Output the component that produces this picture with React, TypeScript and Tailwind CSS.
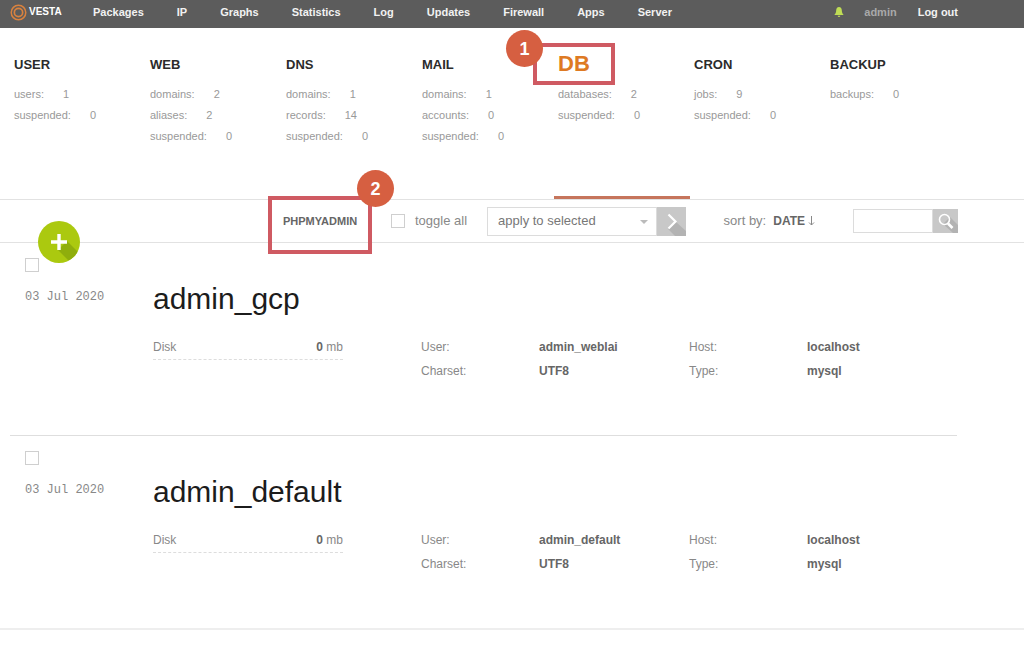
import { useState } from 'react';

const NAV_LINKS = ['Packages', 'IP', 'Graphs', 'Statistics', 'Log', 'Updates', 'Firewall', 'Apps', 'Server'];

type Section = {
  title: string;
  stats: { label: string; value: number }[];
  active?: boolean;
};

const SECTIONS: Section[] = [
  { title: 'USER', stats: [{ label: 'users', value: 1 }, { label: 'suspended', value: 0 }] },
  {
    title: 'WEB',
    stats: [
      { label: 'domains', value: 2 },
      { label: 'aliases', value: 2 },
      { label: 'suspended', value: 0 },
    ],
  },
  {
    title: 'DNS',
    stats: [
      { label: 'domains', value: 1 },
      { label: 'records', value: 14 },
      { label: 'suspended', value: 0 },
    ],
  },
  {
    title: 'MAIL',
    stats: [
      { label: 'domains', value: 1 },
      { label: 'accounts', value: 0 },
      { label: 'suspended', value: 0 },
    ],
  },
  {
    title: 'DB',
    active: true,
    stats: [{ label: 'databases', value: 2 }, { label: 'suspended', value: 0 }],
  },
  { title: 'CRON', stats: [{ label: 'jobs', value: 9 }, { label: 'suspended', value: 0 }] },
  { title: 'BACKUP', stats: [{ label: 'backups', value: 0 }] },
];

const DATABASES = [
  { name: 'admin_gcp', date: '03 Jul 2020', disk: 0, user: 'admin_weblai', charset: 'UTF8', host: 'localhost', type: 'mysql' },
  { name: 'admin_default', date: '03 Jul 2020', disk: 0, user: 'admin_default', charset: 'UTF8', host: 'localhost', type: 'mysql' },
];

const CHECKBOX = 'block size-[14px] shrink-0 appearance-none border border-[#cfcfcf] bg-white checked:bg-[#aacb12]';

/** Numbered step marker that sits on the corner of a highlight frame. */
function StepBadge({ step, className }: { step: number; className: string }) {
  return (
    <span
      className={`absolute flex size-[37px] items-center justify-center rounded-full bg-[#d65f41] text-lg font-bold text-white ${className}`}
    >
      {step}
    </span>
  );
}

function Logo() {
  return (
    <a href="#" className="flex w-[83px] shrink-0 items-center gap-[2px] text-white">
      <svg viewBox="0 0 18 18" className="size-[17px]" fill="none" stroke="#d9823f">
        <circle cx="9" cy="9" r="7.7" strokeWidth="1.6" />
        <circle cx="9" cy="9" r="4.4" strokeWidth="1.8" />
      </svg>
      <span className="text-[10px] leading-none font-bold">VESTA</span>
    </a>
  );
}

function TopBar() {
  return (
    <header className="flex h-7 items-center bg-[#5c5c5c] pr-[66px] pb-1 pl-[10px] text-[11px] font-bold text-[#f2f2f2]">
      <Logo />
      <nav className="flex gap-[33px]">
        {NAV_LINKS.map((link) => (
          <a key={link} href="#">
            {link}
          </a>
        ))}
      </nav>
      <div className="ml-auto flex items-center">
        <button type="button" aria-label="Notifications" className="mr-5">
          <svg viewBox="0 0 10 10" className="size-[10px]" fill="#bfdc55">
            <path d="M5 0C3.1 0 2.3 1.4 2.2 3.2 2.1 5.4 1.6 6.6.3 8h9.4C8.4 6.6 7.9 5.4 7.8 3.2 7.7 1.4 6.9 0 5 0ZM3.7 8.7a1.3 1.3 0 0 0 2.6 0Z" />
          </svg>
        </button>
        <a href="#" className="mr-[21px] text-[#a9a9a9]">
          admin
        </a>
        <a href="#">Log out</a>
      </div>
    </header>
  );
}

function SectionTab({ section }: { section: Section }) {
  return (
    <div className={`h-full border-b-[3px] px-1 ${section.active ? 'border-[#c6755c]' : 'border-transparent'}`}>
      <h2 className="relative flex h-[22px] items-center">
        <a
          href="#"
          className={
            section.active ? 'pb-1 text-[22px] font-bold text-[#de7a23]' : 'text-[13px] font-bold text-[#2b2b2b]'
          }
        >
          {section.title}
        </a>
        {section.active && (
          <>
            <span className="pointer-events-none absolute -top-[11px] -left-[25px] h-[42px] w-[82px] border-4 border-[#cf5a62]" />
            <StepBadge step={1} className="-top-6 -left-[52px]" />
          </>
        )}
      </h2>
      <dl className="mt-2 text-[11px] leading-[21px] text-[#999]">
        {section.stats.map((s) => (
          <div key={s.label} className="flex gap-[19px]">
            <dt>{s.label}:</dt>
            <dd>{s.value}</dd>
          </div>
        ))}
      </dl>
    </div>
  );
}

function Toolbar({ allSelected, onToggleAll }: { allSelected: boolean; onToggleAll: (v: boolean) => void }) {
  return (
    <div className="relative flex h-11 items-center border-y border-[#e2e2e2] pr-[66px] pl-[283px] text-[13px] text-[#888]">
      <button
        type="button"
        aria-label="Add database"
        className="absolute -bottom-[21px] left-[38px] size-[42px] overflow-hidden rounded-full bg-[#abc90f]"
      >
        <svg viewBox="0 0 42 42" className="size-full">
          <path d="M29 20 42 33V42H33L20 29Z" fill="#8fae0c" />
          <path d="M21 13v16M13 21h16" stroke="#fff" strokeWidth="3.4" />
        </svg>
      </button>

      <div className="relative w-[108px] shrink-0">
        <a href="#" className="text-[11px] font-bold text-[#666]">
          PHPMYADMIN
        </a>
        <span className="pointer-events-none absolute -top-[15px] -left-[15px] h-[58px] w-[104px] border-4 border-[#cf5a62]" />
        <StepBadge step={2} className="-top-[41px] left-[74px]" />
      </div>

      <label className="flex shrink-0 items-center gap-[10px]">
        <input
          type="checkbox"
          className={CHECKBOX}
          checked={allSelected}
          onChange={(e) => onToggleAll(e.target.checked)}
        />
        toggle all
      </label>

      <form className="ml-5 flex h-[29px] shrink-0" onSubmit={(e) => e.preventDefault()}>
        <div className="relative">
          <select
            aria-label="Apply to selected"
            className="h-full w-[170px] appearance-none border border-[#dcdcdc] bg-white pl-[10px] text-[13px] text-[#777]"
          >
            <option>apply to selected</option>
            <option>delete</option>
          </select>
          <svg viewBox="0 0 8 4" className="pointer-events-none absolute top-[13px] right-[9px] h-1 w-2" fill="#bbb">
            <path d="M0 0h8L4 4Z" />
          </svg>
        </div>
        <button type="submit" aria-label="Apply" className="w-[29px] bg-[#c8c8c8]">
          <svg viewBox="0 0 29 29" className="size-full" fill="none">
            <path d="M19 15 29 24V29H18L11 22Z" fill="#b3b3b3" />
            <path d="m11.500 7.500 7 7-7 7" stroke="#fff" strokeWidth="2.2" />
          </svg>
        </button>
      </form>

      <div className="ml-auto flex shrink-0 items-center">
        <span>sort by:</span>
        <button type="button" className="ml-[7px] flex items-center gap-[3px] text-[12px] font-bold text-[#666]">
          DATE
          <svg viewBox="0 0 7 10" className="h-[10px] w-[7px]" fill="none" stroke="#888">
            <path d="M3.5 0v9M1 6.5l2.5 2.5L6 6.5" />
          </svg>
        </button>
        <form className="ml-[38px] flex h-6" onSubmit={(e) => e.preventDefault()}>
          <input type="text" aria-label="Search" className="w-20 border border-[#dcdcdc] bg-white px-1" />
          <button type="submit" aria-label="Search" className="w-[25px] bg-[#c8c8c8]">
            <svg viewBox="0 0 25 24" className="size-full" fill="none">
              <path d="M17 8 25 16V24H20L10 15Z" fill="#b3b3b3" />
              <circle cx="11.5" cy="10.5" r="5" stroke="#fff" strokeWidth="1.6" />
              <path d="m15 14.500 4.500 4.500" stroke="#fff" strokeWidth="2.6" />
            </svg>
          </button>
        </form>
      </div>
    </div>
  );
}

function Details({ items }: { items: [string, string][] }) {
  return (
    <dl className="grid grid-cols-[118px_1fr]">
      {items.map(([label, value]) => (
        <div key={label} className="contents">
          <dt>{label}:</dt>
          <dd className="font-bold text-[#666]">{value}</dd>
        </div>
      ))}
    </dl>
  );
}

function DatabaseRow({
  db,
  checked,
  onChange,
}: {
  db: (typeof DATABASES)[number];
  checked: boolean;
  onChange: () => void;
}) {
  return (
    <li className="grid grid-cols-[143px_1fr_1fr_1fr] pt-[15px] pb-[52px]">
      <div className="pl-[15px]">
        <input type="checkbox" aria-label={`Select ${db.name}`} className={CHECKBOX} checked={checked} onChange={onChange} />
        <p className="mt-[17px] font-['Liberation_Mono',monospace] text-[12px] leading-4 text-[#888]">{db.date}</p>
      </div>
      <div className="col-span-3 pt-[23px]">
        <h3 className="text-[30px] leading-9 text-[#1c1c1c]">{db.name}</h3>
        <div className="mt-[18px] grid grid-cols-3 text-[12px] leading-6 text-[#888]">
          <div className="pr-[78px]">
            <p className="flex justify-between border-b border-dashed border-[#ddd]">
              <span>Disk</span>
              <span>
                <b className="text-[#666]">{db.disk}</b> mb
              </span>
            </p>
          </div>
          <Details items={[['User', db.user], ['Charset', db.charset]]} />
          <Details items={[['Host', db.host], ['Type', db.type]]} />
        </div>
      </div>
    </li>
  );
}

export default function App() {
  const [selected, setSelected] = useState<string[]>([]);

  const toggle = (name: string) =>
    setSelected((prev) => (prev.includes(name) ? prev.filter((n) => n !== name) : [...prev, name]));

  return (
    <div className="bg-white font-['Liberation_Sans',Arial,sans-serif]">
      <TopBar />
      <div className="mr-[62px] ml-[10px] grid h-[171px] grid-cols-7 pt-[26px]">
        {SECTIONS.map((section) => (
          <SectionTab key={section.title} section={section} />
        ))}
      </div>
      <Toolbar
        allSelected={selected.length === DATABASES.length}
        onToggleAll={(v) => setSelected(v ? DATABASES.map((d) => d.name) : [])}
      />
      <main className="border-b-2 border-[#eee]">
        <ul className="mr-[67px] ml-[10px] divide-y divide-[#dedede]">
          {DATABASES.map((db) => (
            <DatabaseRow key={db.name} db={db} checked={selected.includes(db.name)} onChange={() => toggle(db.name)} />
          ))}
        </ul>
      </main>
    </div>
  );
}
